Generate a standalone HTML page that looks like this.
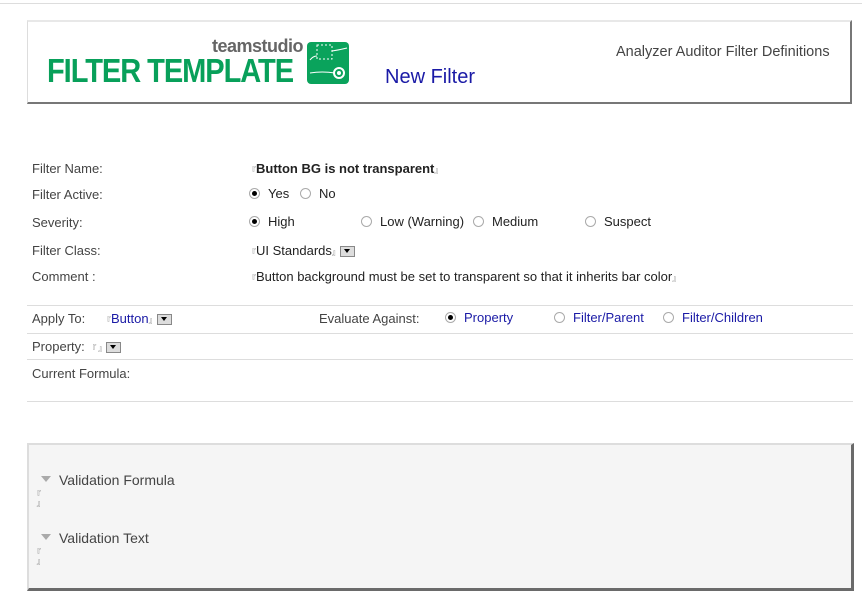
<!DOCTYPE html>
<html><head><meta charset="utf-8"><style>
body{margin:0;width:862px;height:606px;background:#fff;position:relative;overflow:hidden;font-family:"Liberation Sans",Arial,sans-serif;}
.a{position:absolute;white-space:nowrap;}
.lbl{font-size:13px;color:#444;}
.v{font-size:13px;color:#222;}
.blue{color:#1a1aa6;}
.hr{position:absolute;left:27px;width:826px;height:1px;background:#ddd;}
.rad{position:absolute;width:9px;height:9px;border:1px solid #aaa;border-radius:50%;background:#fff;}
.rad.on::after{content:"";position:absolute;left:2px;top:2px;width:5px;height:5px;border-radius:50%;background:#000;}
.br{font-size:8px;color:#777;font-family:"Noto Sans CJK JP",sans-serif;}
.dd{display:inline-block;width:13px;height:9px;border:1px solid #888;background:#ddd;vertical-align:middle;position:relative;}
.dd::after{content:"";position:absolute;left:3px;top:2px;border-left:3px solid transparent;border-right:3px solid transparent;border-top:4px solid #000;}
</style></head><body>
<div style="position:absolute;left:0;top:3px;width:862px;height:1px;background:#ddd"></div>
<div style="position:absolute;left:27px;top:20px;width:822px;height:80px;border:1px solid #ddd;border-right:2px solid #777;border-bottom:2px solid #777;border-top:2px solid #e8e8e8"></div>
<div class="a" style="left:212px;top:36px;font-size:18px;font-weight:bold;color:#666;letter-spacing:-0.5px">teamstudio</div>
<div class="a" style="left:47px;top:52px;font-size:33px;font-weight:bold;color:#08a05a;letter-spacing:-1.2px;transform:scaleX(0.88);transform-origin:left">FILTER TEMPLATE</div>
<svg class="a" style="left:307px;top:42px" width="42" height="42" viewBox="0 0 42 42"><rect width="42" height="42" rx="4" fill="#0aa35c"/><rect x="10" y="3" width="15" height="14" fill="none" stroke="#fff" stroke-dasharray="2 2"/><path d="M3 18 Q6 14 10 14 M25 9 Q32 8 40 6 M3 31 Q15 29 28 31" stroke="#fff" fill="none"/><circle cx="32" cy="31" r="5" fill="none" stroke="#fff" stroke-width="2"/><circle cx="32" cy="31" r="2" fill="#fff"/></svg>
<div class="a" style="left:385px;top:66px;font-size:20px;color:#1a1aa6">New Filter</div>
<div class="a" style="left:616px;top:44px;font-size:14.5px;color:#444">Analyzer Auditor Filter Definitions</div>

<div class="a lbl" style="left:32px;top:161px">Filter Name:</div>
<div class="a v" style="left:248px;top:161px"><span class="br">『</span><b>Button BG is not transparent</b><span class="br">』</span></div>
<div class="a lbl" style="left:32px;top:187px">Filter Active:</div>
<div class="rad on" style="left:249px;top:188px"></div><div class="a v" style="left:268px;top:186px">Yes</div>
<div class="rad" style="left:300px;top:188px"></div><div class="a v" style="left:319px;top:186px">No</div>
<div class="a lbl" style="left:32px;top:215px">Severity:</div>
<div class="rad on" style="left:249px;top:216px"></div><div class="a v" style="left:268px;top:214px">High</div>
<div class="rad" style="left:361px;top:216px"></div><div class="a v" style="left:380px;top:214px">Low (Warning)</div>
<div class="rad" style="left:473px;top:216px"></div><div class="a v" style="left:492px;top:214px">Medium</div>
<div class="rad" style="left:585px;top:216px"></div><div class="a v" style="left:604px;top:214px">Suspect</div>
<div class="a lbl" style="left:32px;top:243px">Filter Class:</div>
<div class="a v" style="left:248px;top:243px"><span class="br">『</span>UI Standards<span class="br">』</span><span class="dd"></span></div>
<div class="a lbl" style="left:32px;top:269px">Comment :</div>
<div class="a v" style="left:248px;top:269px"><span class="br">『</span>Button background must be set to transparent so that it inherits bar color<span class="br">』</span></div>

<div class="hr" style="top:305px"></div>
<div class="a lbl" style="left:32px;top:311px">Apply To:</div>
<div class="a v blue" style="left:103px;top:311px"><span class="br">『</span>Button<span class="br">』</span><span class="dd"></span></div>
<div class="a lbl" style="left:319px;top:311px">Evaluate Against:</div>
<div class="rad on" style="left:445px;top:312px"></div><div class="a v blue" style="left:464px;top:310px">Property</div>
<div class="rad" style="left:554px;top:312px"></div><div class="a v blue" style="left:573px;top:310px">Filter/Parent</div>
<div class="rad" style="left:663px;top:312px"></div><div class="a v blue" style="left:682px;top:310px">Filter/Children</div>
<div class="hr" style="top:333px"></div>
<div class="a lbl" style="left:32px;top:339px">Property: <span class="br">『 』</span><span class="dd"></span></div>
<div class="hr" style="top:359px"></div>
<div class="a lbl" style="left:32px;top:366px">Current Formula:</div>
<div class="hr" style="top:401px"></div>

<div style="position:absolute;left:27px;top:443px;width:822px;height:143px;background:#f5f5f5;border:2px solid #ddd;border-right:3px solid #6a6a6a;border-bottom:3px solid #6a6a6a"></div>
<div class="a" style="left:41px;top:476px;width:0;height:0;border-left:5px solid transparent;border-right:5px solid transparent;border-top:6px solid #aaa"></div>
<div class="a" style="left:59px;top:472px;font-size:14px;color:#444">Validation Formula</div>
<div class="a br" style="left:33px;top:490px;line-height:9px">『<br>&nbsp;&nbsp;』</div>
<div class="a" style="left:41px;top:534px;width:0;height:0;border-left:5px solid transparent;border-right:5px solid transparent;border-top:6px solid #aaa"></div>
<div class="a" style="left:59px;top:530px;font-size:14px;color:#444">Validation Text</div>
<div class="a br" style="left:33px;top:548px;line-height:9px">『<br>&nbsp;&nbsp;』</div>
</body></html>
